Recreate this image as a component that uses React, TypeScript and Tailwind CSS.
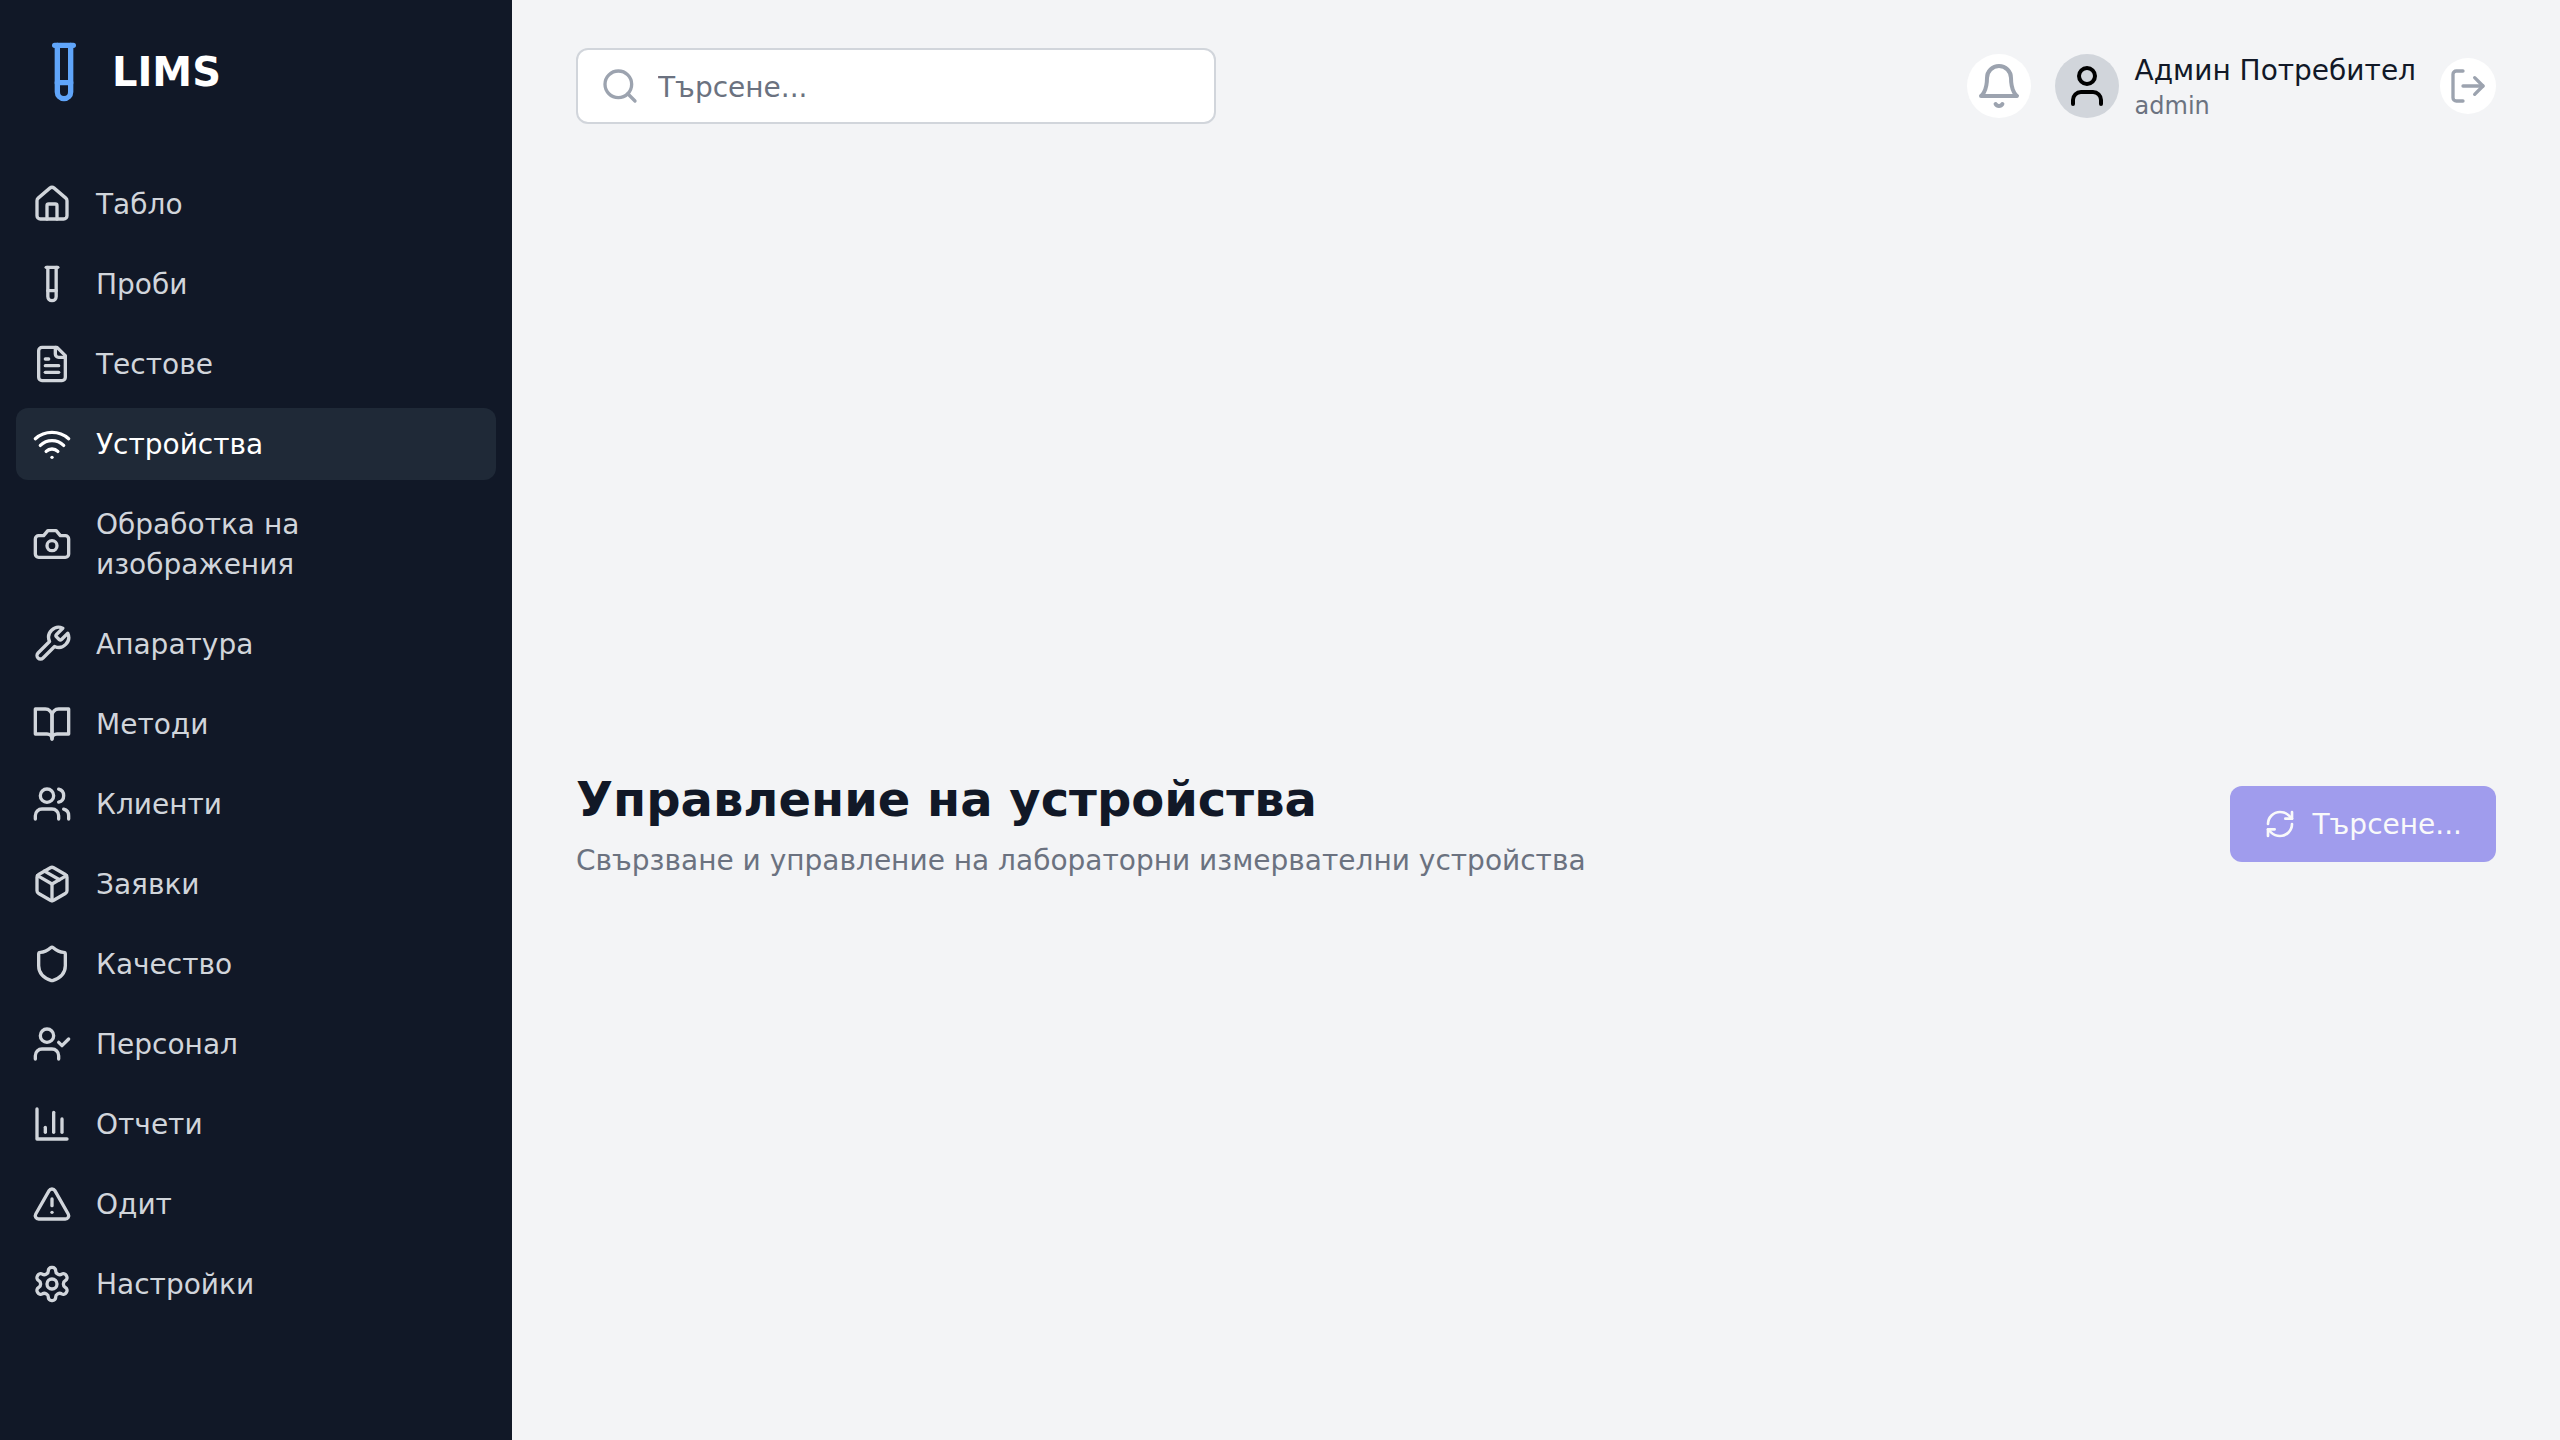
import type { ReactNode } from "react";
import {
  Home,
  TestTube,
  Wifi,
  Users,
  Package,
  Shield,
  UserCheck,
  TriangleAlert,
  Search,
  User,
  LogOut,
  RefreshCw,
} from "lucide-react";

type IconProps = { size?: number; className?: string };

// older lucide shapes, the installed package has redrawn these
function Glyph({ size = 24, className, children }: IconProps & { children: ReactNode }) {
  return (
    <svg
      width={size}
      height={size}
      viewBox="0 0 24 24"
      fill="none"
      stroke="currentColor"
      strokeWidth={2}
      strokeLinecap="round"
      strokeLinejoin="round"
      className={className}
    >
      {children}
    </svg>
  );
}

const FileTextIcon = (props: IconProps) => (
  <Glyph {...props}>
    <path d="M15 2H6a2 2 0 0 0-2 2v16a2 2 0 0 0 2 2h12a2 2 0 0 0 2-2V7Z" />
    <path d="M14 2v4a2 2 0 0 0 2 2h4" />
    <path d="M10 9H8" />
    <path d="M16 13H8" />
    <path d="M16 17H8" />
  </Glyph>
);

const CameraIcon = (props: IconProps) => (
  <Glyph {...props}>
    <path d="M14.5 4h-5L7 7H4a2 2 0 0 0-2 2v9a2 2 0 0 0 2 2h16a2 2 0 0 0 2-2V9a2 2 0 0 0-2-2h-3l-2.5-3z" />
    <circle cx="12" cy="13" r="3" />
  </Glyph>
);

const WrenchIcon = (props: IconProps) => (
  <Glyph {...props}>
    <path d="M14.7 6.3a1 1 0 0 0 0 1.4l1.6 1.6a1 1 0 0 0 1.4 0l3.77-3.77a6 6 0 0 1-7.94 7.94l-6.91 6.91a2.12 2.12 0 0 1-3-3l6.91-6.91a6 6 0 0 1 7.94-7.94l-3.76 3.76z" />
  </Glyph>
);

const BookIcon = (props: IconProps) => (
  <Glyph {...props}>
    <path d="M2 3h6a4 4 0 0 1 4 4v14a3 3 0 0 0-3-3H2z" />
    <path d="M22 3h-6a4 4 0 0 0-4 4v14a3 3 0 0 1 3-3h7z" />
  </Glyph>
);

const ChartIcon = (props: IconProps) => (
  <Glyph {...props}>
    <path d="M3 3v18h18" />
    <path d="M18 17V9" />
    <path d="M13 17V5" />
    <path d="M8 17v-3" />
  </Glyph>
);

const GearIcon = (props: IconProps) => (
  <Glyph {...props}>
    <path d="M12.22 2h-.44a2 2 0 0 0-2 2v.18a2 2 0 0 1-1 1.73l-.43.25a2 2 0 0 1-2 0l-.15-.08a2 2 0 0 0-2.73.73l-.22.38a2 2 0 0 0 .73 2.73l.15.1a2 2 0 0 1 1 1.72v.51a2 2 0 0 1-1 1.74l-.15.09a2 2 0 0 0-.73 2.73l.22.38a2 2 0 0 0 2.73.73l.15-.08a2 2 0 0 1 2 0l.43.25a2 2 0 0 1 1 1.73V20a2 2 0 0 0 2 2h.44a2 2 0 0 0 2-2v-.18a2 2 0 0 1 1-1.73l.43-.25a2 2 0 0 1 2 0l.15.08a2 2 0 0 0 2.73-.73l.22-.39a2 2 0 0 0-.73-2.73l-.15-.08a2 2 0 0 1-1-1.74v-.5a2 2 0 0 1 1-1.74l.15-.09a2 2 0 0 0 .73-2.73l-.22-.38a2 2 0 0 0-2.73-.73l-.15.08a2 2 0 0 1-2 0l-.43-.25a2 2 0 0 1-1-1.73V4a2 2 0 0 0-2-2z" />
    <circle cx="12" cy="12" r="3" />
  </Glyph>
);

const BellIcon = (props: IconProps) => (
  <Glyph {...props}>
    <path d="M6 8a6 6 0 0 1 12 0c0 7 3 9 3 9H3s3-2 3-9" />
    <path d="M10.3 21a1.94 1.94 0 0 0 3.4 0" />
  </Glyph>
);

const navItems = [
  { label: "Табло", icon: Home },
  { label: "Проби", icon: TestTube },
  { label: "Тестове", icon: FileTextIcon },
  { label: "Устройства", icon: Wifi, active: true },
  { label: "Обработка на изображения", icon: CameraIcon },
  { label: "Апаратура", icon: WrenchIcon },
  { label: "Методи", icon: BookIcon },
  { label: "Клиенти", icon: Users },
  { label: "Заявки", icon: Package },
  { label: "Качество", icon: Shield },
  { label: "Персонал", icon: UserCheck },
  { label: "Отчети", icon: ChartIcon },
  { label: "Одит", icon: TriangleAlert },
  { label: "Настройки", icon: GearIcon },
];

function Sidebar() {
  return (
    <aside className="flex w-[512px] shrink-0 flex-col bg-[#111827]">
      <div className="flex h-[144px] items-center px-8">
        <TestTube size={64} className="text-[#60a5fa]" />
        <span className="ml-4 text-[40px] leading-[56px] font-bold text-white">LIMS</span>
      </div>
      <nav className="mt-6 flex flex-col gap-2 px-4">
        {navItems.map((item) => {
          const Icon = item.icon;
          return (
            <a
              key={item.label}
              className={`flex items-center rounded-xl px-4 py-[15px] text-[28px] leading-[40px] ${
                item.active ? "bg-[#1f2937] text-white" : "text-[#d1d5db]"
              }`}
            >
              <Icon size={40} className="mr-6 shrink-0" />
              <span className="pt-[2px]">{item.label}</span>
            </a>
          );
        })}
      </nav>
    </aside>
  );
}

function Header() {
  return (
    <header className="flex items-center justify-between px-16 py-12">
      <div className="relative w-[640px]">
        <Search size={40} className="absolute top-[18px] left-6 text-[#9ca3af]" />
        <input
          placeholder="Търсене..."
          className="h-[76px] w-full rounded-xl border-2 border-[#d1d5db] bg-white pt-[2px] pr-6 pl-20 text-[28px] placeholder:text-[#6b7280]"
        />
      </div>
      <div className="flex items-center">
        <button className="rounded-full bg-white p-2 text-[#9ca3af]">
          <BellIcon size={48} />
        </button>
        <div className="ml-6 flex items-center">
          <div className="flex size-16 items-center justify-center rounded-full bg-[#d1d5db] text-black">
            <User size={48} />
          </div>
          <div className="ml-4">
            <p className="text-[28px] leading-[41px] text-[#111827]">Админ Потребител</p>
            <p className="text-[24px] leading-[31px] text-[#6b7280]">admin</p>
          </div>
        </div>
        <button className="ml-6 rounded-full bg-white p-2 text-[#9ca3af]">
          <LogOut size={40} />
        </button>
      </div>
    </header>
  );
}

export default function App() {
  return (
    <div className="flex h-[1440px] overflow-hidden bg-[#f3f4f6] font-['DejaVu_Sans',sans-serif]">
      <Sidebar />
      <main className="flex min-w-0 flex-1 flex-col">
        <Header />
        <section className="flex flex-1 items-center justify-between px-16 pt-9">
          <div>
            <h1 className="text-[48px] leading-[62px] font-bold text-[#111827]">Управление на устройства</h1>
            <p className="mt-3 text-[28px] leading-[38px] text-[#6b7280]">
              Свързване и управление на лабораторни измервателни устройства
            </p>
          </div>
          <button
            disabled
            className="flex h-[76px] items-center rounded-xl bg-[#4f46e5] px-[34px] text-[28px] text-white opacity-50"
          >
            <RefreshCw size={32} className="mr-4" />
            <span className="pt-[2px]">Търсене...</span>
          </button>
        </section>
      </main>
    </div>
  );
}
